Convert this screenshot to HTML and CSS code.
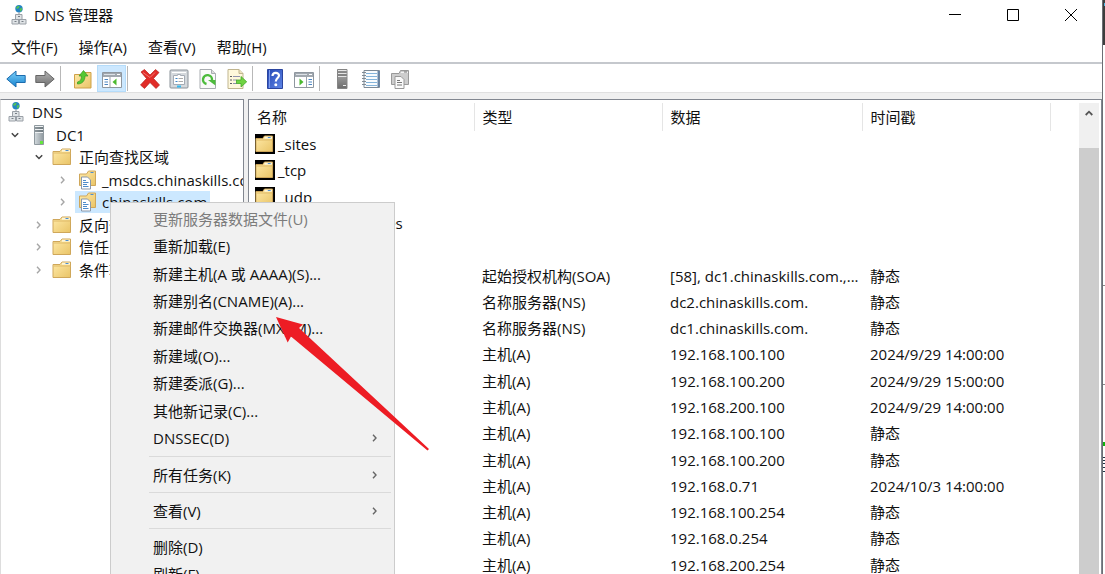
FILE: index.html
```html
<!DOCTYPE html>
<html lang="zh-CN">
<head>
<meta charset="utf-8">
<title>DNS 管理器</title>
<link rel="stylesheet" href="styles.css">
</head>
<body>
<svg class="defs" aria-hidden="true">
  <defs>
    <linearGradient id="gFolder" x1="0" y1="0" x2="1" y2="1"><stop offset="0" stop-color="#ffeaa8"/><stop offset="1" stop-color="#e9c467"/></linearGradient>
    <linearGradient id="gBlue" x1="0" y1="0" x2="0" y2="1"><stop offset="0" stop-color="#7fd0f8"/><stop offset="1" stop-color="#1583d0"/></linearGradient>
    <linearGradient id="gGrey" x1="0" y1="0" x2="0" y2="1"><stop offset="0" stop-color="#b5b5b5"/><stop offset="1" stop-color="#6c6c6c"/></linearGradient>
    <linearGradient id="gServer" x1="0" y1="0" x2="1" y2="0"><stop offset="0" stop-color="#d3dade"/><stop offset="1" stop-color="#8f999f"/></linearGradient>
    <linearGradient id="gHelp" x1="0" y1="0" x2="1" y2="1"><stop offset="0" stop-color="#2447b5"/><stop offset="1" stop-color="#5f86e6"/></linearGradient>
    <symbol id="dns" viewBox="0 0 16 20">
      <circle cx="8" cy="3.8" r="3.7" fill="#2383c4"/><path d="M5 2.500Q7 .2 8.500 1L8 3 6 4zM8.500 4l2-1.500.8 2L9.500 7z" fill="#52c05a"/>
      <path d="M8 7.500V10" stroke="#8b9096"/>
      <g fill="#dfe3e6" stroke="#9aa0a7"><path d="M4.500 9.500h6.500v5H4.500zM1 14.500h6.500v4.500H1zM8.500 14.500H15v4.500H8.500z"/></g>
      <path d="M7 11.500h2M3.500 16.500h2M10.500 16.500h2" stroke="#777e86"/>
    </symbol>
    <symbol id="server" viewBox="0 0 12 20">
      <path d="M1.500.5h9v19h-9z" fill="url(#gServer)" stroke="#8f999f"/>
      <path d="M2 1.500h8M2 4.500h8M2 7.500h8" stroke="#eef1f3"/><path d="M2 3h8M2 6h8" stroke="#4d585f" stroke-width="1.200"/>
      <rect x="7" y="16" width="3" height="3" fill="#65e53e"/>
    </symbol>
    <symbol id="folder" viewBox="0 0 20 18" preserveAspectRatio="none">
      <path d="M1 3.500h7l2-2.500h8.500v15.500H1z" fill="url(#gFolder)" stroke="#cfa75a"/>
      <path d="M10 2.700h8" stroke="#fff6d8" stroke-width="2"/><path d="M13.500 2.500h3" stroke="#4c8fd2"/>
      <path d="M1.500 5h17" stroke="#dfba68"/>
    </symbol>
    <symbol id="zone" viewBox="0 0 20 20">
      <path d="M2.500 4h7l2-3h7v14.500h-16z" fill="url(#gFolder)" stroke="#cfa75a"/>
      <path d="M13.500 2.500h3" stroke="#4c8fd2"/>
      <path d="M4.500 7h6l3 3v9h-9z" fill="#fff" stroke="#8a98aa"/>
      <path d="M6 10.500h3M6 12.500h5.500M6 14.500h4M6 16.500h5.500" stroke="#4e8cca"/>
    </symbol>
    <symbol id="chev" viewBox="0 0 8 8"><path d="M2 .8l3 3.200-3 3.200" fill="none" stroke="currentColor" stroke-width="1.400"/></symbol>
    <symbol id="chevDown" viewBox="0 0 8 8"><path d="M.8 2.200L4 5.500l3.200-3.300" fill="none" stroke="currentColor" stroke-width="1.500"/></symbol>
  </defs>
</svg>

<div class="desktop">
<main class="window">
  <header class="titlebar">
    <svg class="dns-icon"><use href="#dns"/></svg>
    <h1 class="title">DNS 管理器</h1>
    <div class="controls">
      <button class="control" aria-label="最小化"><svg viewBox="0 0 12 12"><path d="M0 5.500h12" stroke="#000"/></svg></button>
      <button class="control" aria-label="最大化"><svg viewBox="0 0 12 12"><path d="M.5.5h11v11H.5z" fill="none" stroke="#000"/></svg></button>
      <button class="control" aria-label="关闭"><svg viewBox="0 0 12 12"><path d="M0 0l12 12M12 0L0 12" stroke="#000"/></svg></button>
    </div>
  </header>

  <nav class="menubar">
    <button>文件(F)</button><button>操作(A)</button><button>查看(V)</button><button>帮助(H)</button>
  </nav>

  <div class="toolbar">
    <button class="tool" aria-label="后退"><svg viewBox="0 0 20 20"><path d="M.8 10L10 2v4.500h9.200v7H10V18z" fill="url(#gBlue)" stroke="#1c6cae"/></svg></button>
    <button class="tool" aria-label="前进"><svg viewBox="0 0 20 20"><path d="M19.200 10L10 2v4.500H.8v7H10V18z" fill="url(#gGrey)" stroke="#666"/></svg></button>
    <span class="sep"></span>
    <button class="tool" aria-label="上一级"><svg viewBox="0 0 20 20"><path d="M1.500 5.500h7l2-2H18v15.500H1.500z" fill="url(#gFolder)" stroke="#cfa149"/><path d="M4.500 13c3-.5 4-3 4-6H6l4.500-5.500L15 7h-3c0 5-3 8-7.500 8z" fill="#55c832" stroke="#369a20" stroke-width=".7"/></svg></button>
    <button class="tool active" aria-label="显示/隐藏控制台树"><svg viewBox="0 0 20 20"><path d="M.5 3.500h19v15H.5z" fill="#fff" stroke="#8f979f"/><path d="M1 4h18v4H1z" fill="#a1a8af"/><path d="M2 5.500h11" stroke="#dce1e6"/><path d="M15 5.500h3" stroke="#fff"/><path d="M8 8v10" stroke="#9ba3aa"/><path d="M2.500 10.500h3.500M2.500 13h3.500M2.500 15.500h3.500" stroke="#4c86c2"/><path d="M14.500 9.500v7l-4-3.500z" fill="#4bb92f"/></svg></button>
    <span class="sep"></span>
    <button class="tool" aria-label="删除"><svg viewBox="0 0 20 20"><path d="M1 3l3.500-2.500L10 6l5.500-5.500L19 3.500 13.500 9.500l6 6.500-3.500 3.500L10 13.500 4.500 19.500.5 16 6.500 9.500z" fill="#e12c28" stroke="#b61f1c" stroke-width=".7"/><path d="M3 3.500l7 5 5-5" fill="none" stroke="#f47670"/></svg></button>
    <button class="tool" aria-label="属性"><svg viewBox="0 0 20 20"><rect x="1" y="1" width="18" height="18" rx="1" fill="#d5d9dd" stroke="#8b9299"/><path d="M3 3.500h14" stroke="#fff"/><path d="M4.500 6.500h4v-1h3v1h4v9h-11z" fill="#fff" stroke="#a4abb4"/><path d="M6.500 9.500h2M6.500 12.500h2" stroke="#3d83c6"/><path d="M9.500 9.500h4.500M9.500 12.500h4.500" stroke="#aaa"/><path d="M8 17.500h4" stroke="#35baf0" stroke-width="2"/></svg></button>
    <button class="tool" aria-label="刷新"><svg viewBox="0 0 20 20"><path d="M2 .5h11.500l4 4v15H2z" fill="#fafafa" stroke="#a9adb1"/><path d="M13.500.5v4h4" fill="#ddd" stroke="#a9adb1"/><path d="M8.500 15A4.500 4.500 0 1 1 14 11" fill="none" stroke="#4dbb3c" stroke-width="2.400"/><path d="M10 11h7.500v5.500z" fill="#4dbb3c"/></svg></button>
    <button class="tool" aria-label="导出列表"><svg viewBox="0 0 20 20"><path d="M1 .5h11l4 4v15H1z" fill="#fff8dc" stroke="#c0b58f"/><path d="M12 .5v4h4" fill="#eee3bd" stroke="#c0b58f"/><path d="M3 7.500h2M3 11h2M3 14.500h2" stroke="#5d5d62"/><path d="M6 7.500h7M6 11h4M6 14.500h4" stroke="#9393ae"/><path d="M9.500 11h4.500V7.500l5.700 5.300-5.700 5.200v-3.500H9.500z" fill="#70d342" stroke="#44a828" stroke-width=".8"/></svg></button>
    <span class="sep"></span>
    <button class="tool" aria-label="帮助"><svg viewBox="0 0 20 20"><path d="M2.500.5h15v19h-15z" fill="url(#gHelp)" stroke="#2b459f"/><path d="M4.500 1v18" stroke="#7f9cec"/><path d="M7.500 7c0-4 6.500-4 6.500-.5 0 2.500-3.200 2.500-3.200 6" fill="none" stroke="#fff" stroke-width="2.200"/><circle cx="10.800" cy="15.700" r="1.500" fill="#fff"/></svg></button>
    <button class="tool" aria-label="操作窗格"><svg viewBox="0 0 20 20"><path d="M.5 3.500h19v15H.5z" fill="#fff" stroke="#8f979f"/><path d="M1 4h18v4H1z" fill="#a1a8af"/><path d="M2 5.500h11" stroke="#dce1e6"/><path d="M15 5.500h3" stroke="#fff"/><path d="M12.500 8v10" stroke="#9ba3aa"/><path d="M14.500 10.500H18M14.500 13H18M14.500 15.500H18" stroke="#4c86c2"/><path d="M5.500 9.500v7l4-3.500z" fill="#4bb92f"/></svg></button>
    <span class="sep"></span>
    <button class="tool" aria-label="新建服务器"><svg viewBox="0 0 20 20"><path d="M5.500.5h9.500v19H5.500z" fill="url(#gGrey)" stroke="#858585"/><path d="M6 1.500h8.500M6 4.500h8.500M6 7.500h8.500" stroke="#e5e5e5"/><path d="M6 3h8.500M6 6h8.500" stroke="#666"/><path d="M11 16.500h3" stroke="#eee"/></svg></button>
    <button class="tool" aria-label="新建记录"><svg viewBox="0 0 20 20"><path d="M3 1.500h15.500v17H3z" fill="#f8fbfd" stroke="#7d8a96"/><path d="M17.500 2v16" stroke="#6583a5" stroke-width="2"/><path d="M5 4.500h11M5 7.500h11M5 10.500h11M5 13.500h11M5 16.500h11" stroke="#84b4db"/><path d="M1 3.500h4M1 6.500h4M1 9.500h4M1 12.500h4M1 15.500h4" stroke="#808b95"/></svg></button>
    <button class="tool" aria-label="新建区域"><svg viewBox="0 0 20 20"><path d="M1.500 4.500H9l1.500-3h8v14h-17z" fill="#cdcdcd" stroke="#999"/><path d="M11 3.500h7" stroke="#f3f3f3"/><path d="M14 3h3" stroke="#777"/><path d="M5 7.500h6l3 3v9H5z" fill="#fafafa" stroke="#999"/><path d="M7 11.500h3M7 13.500h5M7 16h5" stroke="#777"/></svg></button>
  </div>

  <div class="panes">
    <section class="tree-pane" aria-label="控制台树">
      <ul class="tree">
        <li class="node level-0"><svg class="dns-icon"><use href="#dns"/></svg><span>DNS</span></li>
        <li class="node level-1"><svg class="twist open"><use href="#chevDown"/></svg><svg class="server-icon"><use href="#server"/></svg><span>DC1</span></li>
        <li class="node level-2"><svg class="twist open"><use href="#chevDown"/></svg><svg class="folder-icon"><use href="#folder"/></svg><span>正向查找区域</span></li>
        <li class="node level-3"><svg class="twist"><use href="#chev"/></svg><span class="zone-label"><svg class="zone-icon"><use href="#zone"/></svg><span>_msdcs.chinaskills.com</span></span></li>
        <li class="node level-3"><svg class="twist"><use href="#chev"/></svg><span class="zone-label selected"><svg class="zone-icon"><use href="#zone"/></svg><span>chinaskills.com</span></span></li>
        <li class="node level-2"><svg class="twist"><use href="#chev"/></svg><svg class="folder-icon"><use href="#folder"/></svg><span>反向查找区域</span></li>
        <li class="node level-2"><svg class="twist"><use href="#chev"/></svg><svg class="folder-icon"><use href="#folder"/></svg><span>信任点</span></li>
        <li class="node level-2"><svg class="twist"><use href="#chev"/></svg><svg class="folder-icon"><use href="#folder"/></svg><span>条件转发器</span></li>
      </ul>
    </section>

    <section class="list-pane" aria-label="记录列表">
      <div class="list-scroll">
        <table class="records">
          <colgroup><col class="c-name"><col class="c-type"><col class="c-data"><col class="c-time"><col></colgroup>
          <thead><tr><th>名称</th><th>类型</th><th>数据</th><th>时间戳</th><th></th></tr></thead>
          <tbody>
            <tr><td class="name"><svg class="row-folder"><use href="#folder"/></svg>_sites</td><td></td><td></td><td></td><td></td></tr>
            <tr><td class="name"><svg class="row-folder"><use href="#folder"/></svg>_tcp</td><td></td><td></td><td></td><td></td></tr>
            <tr><td class="name"><svg class="row-folder"><use href="#folder"/></svg>_udp</td><td></td><td></td><td></td><td></td></tr>
            <tr><td class="name"><svg class="row-folder"><use href="#folder"/></svg>DomainDnsZones</td><td></td><td></td><td></td><td></td></tr>
            <tr><td class="name"></td><td></td><td></td><td></td><td></td></tr>
            <tr><td></td><td>起始授权机构(SOA)</td><td>[58], dc1.chinaskills.com.,...</td><td>静态</td><td></td></tr>
            <tr><td></td><td>名称服务器(NS)</td><td>dc2.chinaskills.com.</td><td>静态</td><td></td></tr>
            <tr><td></td><td>名称服务器(NS)</td><td>dc1.chinaskills.com.</td><td>静态</td><td></td></tr>
            <tr><td></td><td>主机(A)</td><td>192.168.100.100</td><td>2024/9/29 14:00:00</td><td></td></tr>
            <tr><td></td><td>主机(A)</td><td>192.168.100.200</td><td>2024/9/29 15:00:00</td><td></td></tr>
            <tr><td></td><td>主机(A)</td><td>192.168.200.100</td><td>2024/9/29 14:00:00</td><td></td></tr>
            <tr><td></td><td>主机(A)</td><td>192.168.100.100</td><td>静态</td><td></td></tr>
            <tr><td></td><td>主机(A)</td><td>192.168.100.200</td><td>静态</td><td></td></tr>
            <tr><td></td><td>主机(A)</td><td>192.168.0.71</td><td>2024/10/3 14:00:00</td><td></td></tr>
            <tr><td></td><td>主机(A)</td><td>192.168.100.254</td><td>静态</td><td></td></tr>
            <tr><td></td><td>主机(A)</td><td>192.168.0.254</td><td>静态</td><td></td></tr>
            <tr><td></td><td>主机(A)</td><td>192.168.200.254</td><td>静态</td><td></td></tr>
          </tbody>
        </table>
      </div>
      <div class="scrollbar">
        <button class="scroll-up" aria-label="向上滚动"><svg viewBox="0 0 8 6"><path d="M.7 5L4 1.700 7.300 5" fill="none" stroke="#555" stroke-width="1.800"/></svg></button>
        <div class="thumb"></div>
      </div>
    </section>
  </div>
</main>
<aside class="backdrop" aria-hidden="true">
  <svg class="backdrop-marks" viewBox="0 0 3 574"><path d="M0 285.500h3M0 384.500h3" stroke="#888"/><path d="M0 442h3v4H0z" fill="#0db30d"/><path d="M0 457.500h3M0 460.500h3M0 463.500h3M0 467.500h3M0 471.500h3" stroke="#223344"/><path d="M0 0h3v45H0z" fill="#3d3d3d"/><path d="M1 3h2v3H1z" fill="#49b8e8"/></svg>
</aside>
</div>

<div class="context-menu" role="menu">
  <div class="group group-main">
    <button role="menuitem" disabled>更新服务器数据文件(U)</button>
    <button role="menuitem">重新加载(E)</button>
    <button role="menuitem">新建主机(A 或 AAAA)(S)...</button>
    <button role="menuitem">新建别名(CNAME)(A)...</button>
    <button role="menuitem">新建邮件交换器(MX)(M)...</button>
    <button role="menuitem">新建域(O)...</button>
    <button role="menuitem">新建委派(G)...</button>
    <button role="menuitem">其他新记录(C)...</button>
    <button role="menuitem">DNSSEC(D)<svg class="sub"><use href="#chev"/></svg></button>
  </div>
  <div class="group"><button role="menuitem">所有任务(K)<svg class="sub"><use href="#chev"/></svg></button></div>
  <div class="group"><button role="menuitem">查看(V)<svg class="sub"><use href="#chev"/></svg></button></div>
  <div class="group"><button role="menuitem">删除(D)</button><button role="menuitem">刷新(F)</button></div>
</div>

<svg class="pointer" viewBox="0 0 153 134" aria-hidden="true"><path d="M0 0l27 7.500-4 3.500L153 132l-1.500 1.500L15 19.500l-3.300 6z" fill="#ed1c24"/></svg>
</body>
</html>
```

FILE: styles.css
```css
* { box-sizing: border-box; }

html, body { height: 100%; }

body {
  margin: 0;
  position: relative;
  overflow: hidden;
  background: #fff;
  color: #111;
  font: 15px/20px "Open Sans", "Noto Sans CJK SC", sans-serif;
}

button {
  border: 0;
  padding: 0;
  background: none;
  color: inherit;
  font: inherit;
}

svg { display: block; flex: none; }
.defs { position: absolute; width: 0; height: 0; }

.desktop { display: flex; height: 100vh; }
.window { flex: 1; min-width: 0; display: flex; flex-direction: column; }

.backdrop { width: 3px; border-left: 1px solid #6b6e74; overflow: hidden; }
.backdrop-marks { width: 3px; height: 574px; }

.titlebar { display: flex; align-items: center; height: 29px; padding: 0 2px 0 11px; }
.title { margin: 0 0 0 7px; font-size: 15px; font-weight: 400; }
.dns-icon { width: 16px; height: 20px; }
.controls { display: flex; margin-left: auto; }
.control { width: 58px; height: 29px; display: grid; place-items: center; }
.control svg { width: 12px; height: 12px; }

.menubar { display: flex; align-items: center; gap: 21px; height: 33px; padding: 2px 11px 0; }

.toolbar {
  display: flex;
  height: 31px;
  padding: 1px 0 0 1px;
  border-top: 2px solid #c5c8cd;
  border-bottom: 1px solid #e0e0e0;
}
.tool { width: 29px; display: grid; place-items: center; }
.tool svg { width: 20px; height: 20px; }
.tool.active { background: #cce8ff; box-shadow: inset 0 0 0 1px #b5dcfa; }
.sep { width: 1px; margin: 1px 7px 1px 1px; background: #b8b8b8; }

.panes { flex: 1; min-height: 0; display: flex; gap: 4px; padding-top: 6px; background: #f0f0f0; }
.tree-pane, .list-pane { background: #fff; border: 1px solid #828790; border-bottom: 0; overflow: hidden; }
.tree-pane { flex: none; width: 244px; border-left-color: #ddd; padding-top: 1px; }
.list-pane { flex: 1; min-width: 0; display: flex; padding: 3px 2px 0 0; }

.tree { display: flex; flex-direction: column; height: 180px; margin: 0; padding: 0; list-style: none; white-space: nowrap; }
.node { flex: 1; display: flex; align-items: center; }
.level-0 { padding-left: 7px; gap: 8px; }
.level-1 { padding-left: 10px; }
.level-2 { padding-left: 34px; }
.level-3 { padding-left: 58px; }
.twist { width: 8px; height: 8px; margin-right: 10px; color: #a6a6a6; }
.twist.open { color: #444; }
.level-2 .twist { margin-right: 9px; }
.level-3 .twist { margin-right: 8px; }
.server-icon { width: 12px; height: 20px; margin: 0 11px 0 4px; }
.folder-icon { width: 20px; height: 18px; margin-right: 7px; }
.zone-label { display: flex; align-items: center; gap: 5px; height: 22px; padding: 0 3px 0 2px; }
.zone-icon { width: 20px; height: 20px; }
.selected { background: #cce8ff; }

.list-scroll { flex: 1; min-width: 0; overflow: hidden; }
.records { width: 100%; height: 475px; table-layout: fixed; border-collapse: collapse; white-space: nowrap; }
.c-name { width: 225px; }
.c-type { width: 188px; }
.c-data { width: 200px; }
.c-time { width: 188px; }
.records th { height: 28px; padding: 0 8px; border-right: 1px solid #e5e5e5; text-align: left; font-weight: 400; }
.records th:last-child { border-right: 0; }
.records td { height: 26px; padding: 0 0 0 8px; }
.records td.name { padding-left: 6px; }
.row-folder {
  display: inline-block;
  width: 20px;
  height: 20px;
  margin-right: 3px;
  padding: 1px 1px 1px 0;
  background: #000;
  vertical-align: top;
}

.scrollbar { flex: none; width: 20px; display: flex; flex-direction: column; background: #f0f0f0; }
.scroll-up { height: 45px; display: flex; justify-content: center; padding-top: 7px; }
.scroll-up svg { width: 8px; height: 6px; }
.thumb { flex: 1; background: #cdcdcd; }

.context-menu {
  position: absolute;
  left: 110px;
  top: 202px;
  width: 285px;
  padding: 2px;
  background: #f1f1f1;
  border: 1px solid #ccc;
}
.group { display: flex; flex-direction: column; }
.group-main { height: 247px; }
.group-main button { flex: 1; }
.group + .group::before { content: ""; height: 1px; margin: 4px 1px 4px 36px; background: #dadada; }
.context-menu button { display: flex; align-items: center; min-height: 27px; padding: 0 13px 0 40px; text-align: left; }
.context-menu button:disabled { color: #7c7c7c; }
.sub { width: 8px; height: 8px; margin-left: auto; color: #666; }

.pointer { position: absolute; left: 276px; top: 317px; width: 153px; height: 134px; }
```
